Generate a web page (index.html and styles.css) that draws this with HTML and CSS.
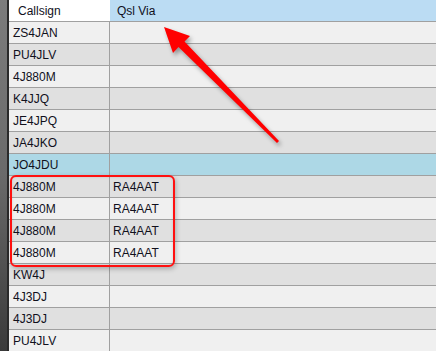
FILE: index.html
```html
<html lang="en">
 <head>
  <meta charset="UTF-8">
  <title>Qsl list</title>
  <link rel="stylesheet" href="styles.css">
 </head>
 <body>
  <div class="window">
   <div class="frame-edge"></div>
   <div class="grid">
    <div class="row head">
     <div class="cell call">Callsign</div>
     <div class="cell via active">Qsl Via</div>
    </div>
    <div class="row"><div class="cell call">ZS4JAN</div><div class="cell via"></div></div>
    <div class="row alt"><div class="cell call">PU4JLV</div><div class="cell via"></div></div>
    <div class="row"><div class="cell call">4J880M</div><div class="cell via"></div></div>
    <div class="row alt"><div class="cell call">K4JJQ</div><div class="cell via"></div></div>
    <div class="row"><div class="cell call">JE4JPQ</div><div class="cell via"></div></div>
    <div class="row alt"><div class="cell call">JA4JKO</div><div class="cell via"></div></div>
    <div class="row selected"><div class="cell call">JO4JDU</div><div class="cell via"></div></div>
    <div class="row alt"><div class="cell call">4J880M</div><div class="cell via">RA4AAT</div></div>
    <div class="row"><div class="cell call">4J880M</div><div class="cell via">RA4AAT</div></div>
    <div class="row alt"><div class="cell call">4J880M</div><div class="cell via">RA4AAT</div></div>
    <div class="row"><div class="cell call">4J880M</div><div class="cell via">RA4AAT</div></div>
    <div class="row alt"><div class="cell call">KW4J</div><div class="cell via"></div></div>
    <div class="row"><div class="cell call">4J3DJ</div><div class="cell via"></div></div>
    <div class="row alt"><div class="cell call">4J3DJ</div><div class="cell via"></div></div>
    <div class="row"><div class="cell call">PU4JLV</div><div class="cell via"></div></div>
   </div>

   <!-- highlight box round the rows with a via -->
   <div class="mark-box"></div>

   <!-- pointer arrow towards the Qsl Via header -->
   <svg class="mark-arrow" width="436" height="351" viewBox="0 0 436 351">
    <polygon points="164,27 190,36 184.5,41.5 279,141 277,143 178.5,47 173,53" fill="#ff0000"/>
   </svg>
  </div>
 </body>
</html>
```

FILE: styles.css
```css
* {
    margin: 0;
    padding: 0;
    box-sizing: border-box;
}

body {
    background: #f0f0f0;
    font-family: 'Liberation Sans', Arial, sans-serif;
    font-size: 12px;
    color: #10101c;
    overflow: hidden;
}

.window {
    position: relative;
    display: flex;
    width: 436px;
    height: 351px;
}

.frame-edge {
    width: 9px;
    flex: none;
    background: linear-gradient(to bottom, #7c7c7c 0%, #6a6a6a 50%, #3a3a3a 100%);
    border-right: 2px solid #2a2a2a;
}

.grid {
    flex: 1;
    display: flex;
    flex-direction: column;
}

.row {
    display: flex;
    height: 22px;
    flex: none;
    background: #f0f0f0;
    border-bottom: 1px solid #a0a0a0;
}

.row.alt {
    background: #e0e0e0;
}

.row.selected {
    background: #add8e6;
}

.cell {
    display: flex;
    align-items: center;
    white-space: nowrap;
}

.cell.call {
    width: 101px;
    padding-left: 4px;
    border-right: 1px solid #a0a0a0;
}

.cell.via {
    flex: 1;
    padding-left: 3px;
}

.row.head {
    background: #ffffff;
    border-bottom: 1px solid #a0a0a0;
}

.row.head .cell.call {
    padding-left: 9px;
    border-right: none;
}

.row.head .cell.active {
    background: #bbdcf3;
    padding-left: 7px;
}

.mark-box {
    position: absolute;
    left: 10px;
    top: 175px;
    width: 165px;
    height: 92px;
    border: 2px solid #ff1010;
    border-radius: 6px;
    box-shadow: 1px 2px 5px rgba(0, 0, 0, 0.25), inset 0 0 3px rgba(0, 0, 0, 0.12);
}

.mark-arrow {
    position: absolute;
    left: 0;
    top: 0;
    filter: drop-shadow(2px 3px 2px rgba(0, 0, 0, 0.35));
}
```
